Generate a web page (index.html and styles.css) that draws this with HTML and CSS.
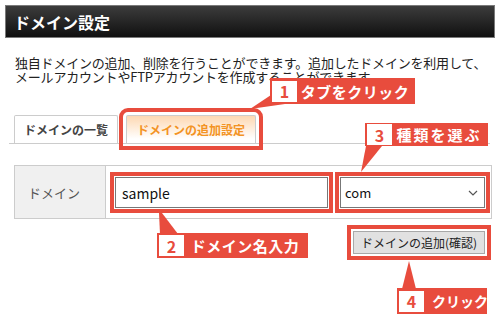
FILE: index.html
```html
<!DOCTYPE html>
<html lang="ja">
<head>
    <meta charset="UTF-8">
    <meta name="viewport" content="width=device-width, initial-scale=1.0">
    <title>ドメイン設定</title>
    <link rel="stylesheet" href="styles.css">
</head>
<body>
    <div class="page">
        <div class="title-bar">
            <h1>ドメイン設定</h1>
        </div>
        <p class="intro">独自ドメインの追加、削除を行うことができます。追加したドメインを利用して、<br>メールアカウントやFTPアカウントを作成することができます。</p>

        <ul class="tabs">
            <li class="tab">ドメインの一覧</li>
            <li class="tab active mark">ドメインの追加設定</li>
        </ul>

        <div class="form-row">
            <div class="form-label">ドメイン</div>
            <div class="form-field">
                <input type="text" class="text-input mark-tight" value="sample">
                <div class="select-wrap mark-tight">
                    <select class="select">
                        <option>com</option>
                    </select>
                    <svg class="chevron" width="10" height="6" viewBox="0 0 10 6"><path d="M1 1l4 4 4-4" fill="none" stroke="#555" stroke-width="1.2"/></svg>
                </div>
            </div>
        </div>

        <div class="actions">
            <button type="button" class="btn mark-btn">ドメインの追加(確認)</button>
        </div>

        <!-- callout pointers -->
        <svg class="pointers" width="500" height="320" viewBox="0 0 500 320">
            <polygon points="271,95 285,104 250,109" fill="#e84c3d"/>
            <polygon points="366,146 382,146 361,172" fill="#e84c3d"/>
            <polygon points="159,213 162,213 178,234 160,234" fill="#e84c3d"/>
            <polygon points="402,289 416,289 409,261" fill="#e84c3d"/>
        </svg>

        <div class="callout c1"><span class="num">1</span><span class="txt">タブをクリック</span></div>
        <div class="callout c2"><span class="num">2</span><span class="txt">ドメイン名入力</span></div>
        <div class="callout c3"><span class="num">3</span><span class="txt">種類を選ぶ</span></div>
        <div class="callout c4"><span class="num">4</span><span class="txt">クリック</span></div>
    </div>
</body>
</html>
```

FILE: styles.css
```css
/* Global */
body {
    margin: 0;
    background: #fff;
    color: #222;
    font-family: "Noto Sans CJK JP", "Open Sans", sans-serif;
}
.page {
    position: relative;
    width: 500px;
    height: 320px;
    padding: 5px;
    box-sizing: border-box;
    overflow: hidden;
}

/* Title bar */
.title-bar {
    height: 31px;
    border: 1px solid #7a7a7a;
    background: linear-gradient(#3c3c3c, #101010);
    padding-left: 8px;
    display: flex;
    align-items: center;
}
.title-bar h1 {
    margin: 0;
    color: #fff;
    font-size: 16px;
    font-weight: bold;
    line-height: 1;
}
.intro {
    margin: 18px 0 0 10px;
    font-size: 13px;
    line-height: 14px;
    letter-spacing: -0.2px;
    color: #222;
    white-space: nowrap;
}

/* Tabs */
.tabs {
    list-style: none;
    margin: 31px 5px 0 4px;
    padding: 0 0 0 5px;
    display: flex;
    gap: 8px;
    border-bottom: 1px solid #ccc;
}
.tab {
    height: 27px;
    line-height: 27px;
    padding: 0 9px;
    border: 1px solid #ccc;
    border-bottom: none;
    border-radius: 2px 2px 0 0;
    font-size: 12px;
    font-weight: bold;
    color: #444;
    background: #fff;
}
.tab.active {
    padding: 0 10px;
    color: #f39323;
    background: linear-gradient(#fdd8b2, #fff 85%);
}

/* Red highlight frames */
.mark {
    outline: 4px solid #e84c3d;
    outline-offset: 3px;
}
.mark-tight {
    outline: 4px solid #e84c3d;
    outline-offset: 1px;
}
.mark-btn {
    outline: 4px solid #e84c3d;
    outline-offset: 2px;
}

/* Form */
.form-row {
    display: flex;
    width: 478px;
    margin: 21px 0 0 9px;
    border: 1px solid #ccc;
    box-sizing: border-box;
}
.form-label {
    width: 91px;
    background: #f0f0f0;
    border-right: 1px solid #ccc;
    display: flex;
    align-items: center;
    padding-left: 13px;
    box-sizing: border-box;
    font-size: 13px;
    color: #555;
}
.form-field {
    display: flex;
    gap: 12px;
    padding: 11px 5px 10px 9px;
}
.text-input {
    width: 213px;
    height: 31px;
    box-sizing: border-box;
    border: 1px solid #777;
    padding: 0 6px;
    font-family: "Noto Sans CJK JP", "Open Sans", sans-serif;
    font-size: 14px;
    color: #111;
}
.select-wrap {
    position: relative;
    width: 145px;
    height: 31px;
}
.select {
    appearance: none;
    width: 100%;
    height: 100%;
    border: 1px solid #777;
    background: #fff;
    padding: 0 4px;
    font-family: "Noto Sans CJK JP", "Open Sans", sans-serif;
    font-size: 13px;
    color: #111;
}
.chevron {
    position: absolute;
    right: 7px;
    top: 13px;
}

/* Actions */
.actions {
    display: flex;
    justify-content: flex-end;
    width: 478px;
    margin: 12px 0 0 9px;
    padding-right: 7px;
    box-sizing: border-box;
}
.btn {
    width: 132px;
    height: 23px;
    padding: 0;
    border: 1px solid #a8a8a8;
    background: #e1e1e1;
    font-family: "Noto Sans CJK JP", sans-serif;
    font-size: 12px;
    color: #222;
}

/* Callouts */
.pointers {
    position: absolute;
    left: 0;
    top: 0;
}
.callout {
    position: absolute;
    display: flex;
    align-items: center;
    height: 25px;
    padding: 2px;
    box-sizing: border-box;
    background: #e84c3d;
    white-space: nowrap;
}
.callout .num {
    flex: none;
    width: 25px;
    height: 21px;
    background: #fff;
    color: #e84c3d;
    font-size: 16px;
    font-weight: bold;
    display: flex;
    align-items: center;
    justify-content: center;
}
.callout .txt {
    flex: 1;
    text-align: center;
    color: #fff;
    font-size: 15px;
    font-weight: bold;
    letter-spacing: 0.5px;
    line-height: 21px;
}
.c1 { left: 270px; top: 78px; width: 145px; height: 26px; }
.c2 { left: 157px; top: 233px; width: 151px; }
.c3 { left: 365px; top: 123px; width: 123px; height: 23px; }
.c3 .txt { letter-spacing: 2px; }
.c4 { left: 397px; top: 288px; width: 90px; height: 26px; }
.c4 .txt { font-size: 14px; letter-spacing: 0; text-align: left; padding-left: 8px; }
```
